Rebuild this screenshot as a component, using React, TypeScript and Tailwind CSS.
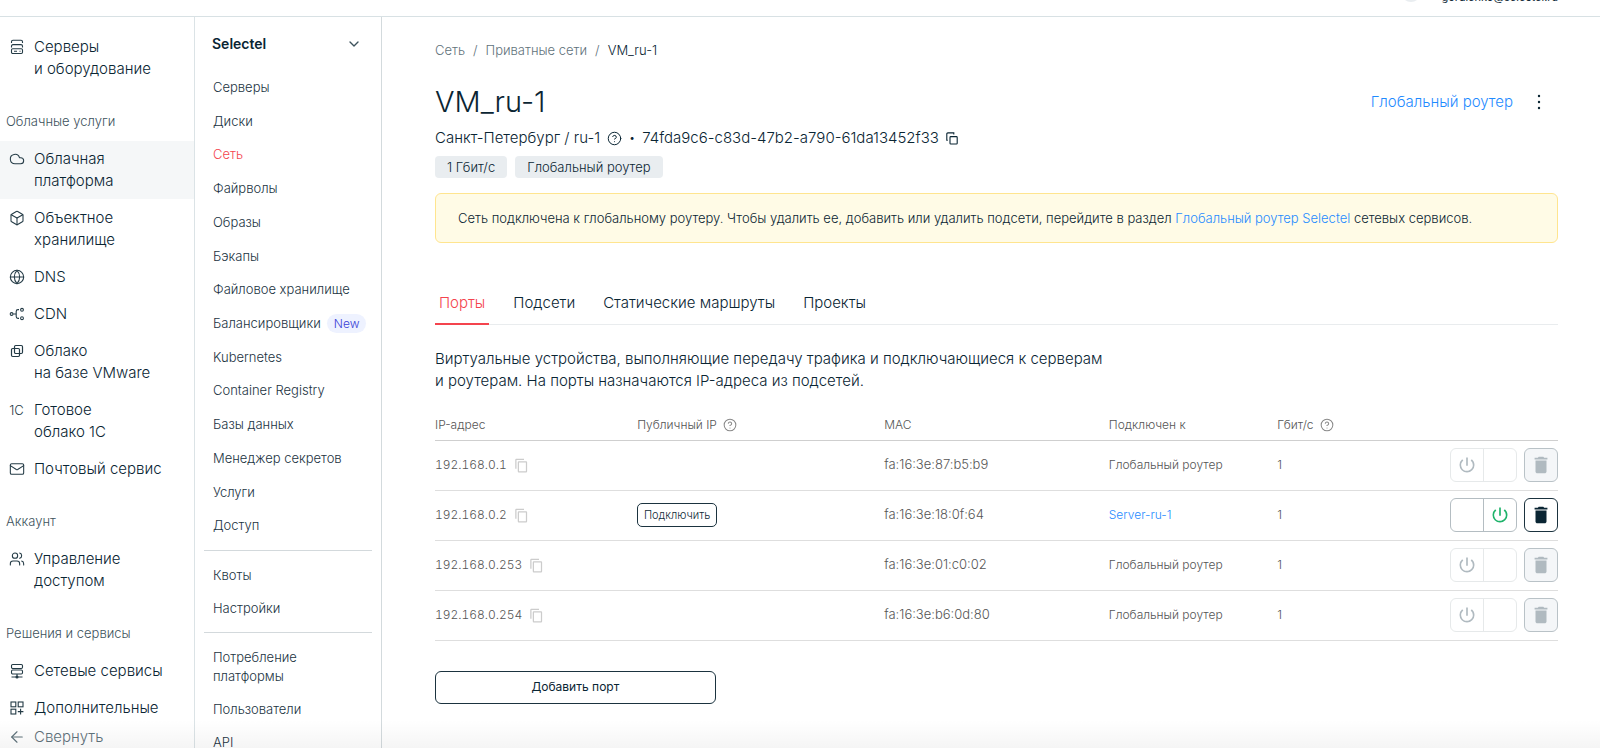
import { ReactNode } from "react";
import { Box, ChevronDown, CircleHelp, Cloud, Globe, Mail, Users, ArrowLeft } from "lucide-react";
import { MdContentCopy, MdDelete, MdPowerSettingsNew } from "react-icons/md";

type NavItem = { label: ReactNode; icon: ReactNode; active?: boolean };
type NavSection = { title?: string; items: NavItem[] };

function ServersIcon() {
  return (
    <svg viewBox="0 0 14 16" className="w-3.5 h-4" fill="none" stroke="currentColor" strokeWidth="1.1">
      <path d="M1.5 4V2.8C1.5 1.8 2 1.3 3 1.3h8c1 0 1.5.5 1.5 1.5V4" />
      <path d="M1.5 8.5V7.2c0-1 .5-1.6 1.5-1.6h8c1 0 1.5.6 1.5 1.6v1.3" />
      <rect x="1.5" y="9.8" width="11" height="4.7" rx="1.2" />
      <path d="M4 12.2h3M9.5 12.2h1" />
    </svg>
  );
}

function CdnIcon() {
  return (
    <svg viewBox="0 0 16 14" className="w-4 h-3.5" fill="none" stroke="currentColor" strokeWidth="1.1">
      <circle cx="2.6" cy="7" r="1.4" />
      <circle cx="13" cy="2.8" r="1.4" />
      <circle cx="13" cy="11.2" r="1.4" />
      <path d="M4.2 7h3M10 2.6H9c-1.2 0-1.8.6-1.8 1.8v5.2c0 1.2.6 1.8 1.8 1.8h1" />
    </svg>
  );
}

function SquaresIcon() {
  return (
    <svg viewBox="0 0 14 14" className="size-3.5" fill="none" stroke="currentColor" strokeWidth="1.2">
      <rect x="4.5" y="1.5" width="8" height="8" rx="1.2" />
      <rect x="1.5" y="4.5" width="8" height="8" rx="1.2" />
    </svg>
  );
}

function NetworkIcon() {
  return (
    <svg viewBox="0 0 14 16" className="w-3.5 h-4" fill="none" stroke="currentColor" strokeWidth="1.1">
      <rect x="1.5" y="1.5" width="11" height="4" rx="1.2" />
      <rect x="1.5" y="7" width="11" height="4" rx="1.2" />
      <path d="M7 11v3M1.5 14h11" />
      <circle cx="7" cy="14" r="1" fill="currentColor" />
    </svg>
  );
}

function GridPlusIcon() {
  return (
    <svg viewBox="0 0 14 14" className="size-3.5" fill="none" stroke="currentColor" strokeWidth="1.1">
      <rect x="1" y="1" width="4.8" height="4.8" />
      <rect x="8.2" y="1" width="4.8" height="4.8" />
      <rect x="1" y="8.2" width="4.8" height="4.8" />
      <path d="M10.6 7.8v5.6M7.8 10.6h5.6" />
    </svg>
  );
}

function CopyIcon() {
  return (
    <svg viewBox="0 0 12 13" className="w-3 h-[13px]" fill="none" stroke="currentColor" strokeWidth="1.1">
      <rect x="4" y="4.6" width="7.2" height="7.4" rx="0.8" />
      <path d="M1.8 8.2H.8V2c0-.7.4-1.1 1.1-1.1h5.9v1.6" />
    </svg>
  );
}

const sections: NavSection[] = [
  {
    items: [{ label: <>Серверы<br />и оборудование</>, icon: <ServersIcon /> }],
  },
  {
    title: "Облачные услуги",
    items: [
      { label: <>Облачная<br />платформа</>, icon: <Cloud className="size-4" strokeWidth={1.6} />, active: true },
      { label: <>Объектное<br />хранилище</>, icon: <Box className="size-4" strokeWidth={1.6} /> },
      { label: "DNS", icon: <Globe className="size-4" strokeWidth={1.6} /> },
      { label: "CDN", icon: <CdnIcon /> },
      { label: <>Облако<br />на базе VMware</>, icon: <SquaresIcon /> },
      { label: <>Готовое<br />облако 1С</>, icon: <span className="text-[13px] leading-4">1С</span> },
      { label: "Почтовый сервис", icon: <Mail className="size-4" strokeWidth={1.6} /> },
    ],
  },
  {
    title: "Аккаунт",
    items: [{ label: <>Управление<br />доступом</>, icon: <Users className="size-4" strokeWidth={1.6} /> }],
  },
  {
    title: "Решения и сервисы",
    items: [
      { label: "Сетевые сервисы", icon: <NetworkIcon /> },
      { label: "Дополнительные", icon: <GridPlusIcon /> },
    ],
  },
];

const platformLinks = [
  "Серверы",
  "Диски",
  "Сеть",
  "Файрволы",
  "Образы",
  "Бэкапы",
  "Файловое хранилище",
  "Балансировщики",
  "Kubernetes",
  "Container Registry",
  "Базы данных",
  "Менеджер секретов",
  "Услуги",
  "Доступ",
];

const ports = [
  { ip: "192.168.0.1", mac: "fa:16:3e:87:b5:b9", target: "Глобальный роутер", speed: 1 },
  { ip: "192.168.0.2", mac: "fa:16:3e:18:0f:64", target: "Server-ru-1", speed: 1, server: true },
  { ip: "192.168.0.253", mac: "fa:16:3e:01:c0:02", target: "Глобальный роутер", speed: 1 },
  { ip: "192.168.0.254", mac: "fa:16:3e:b6:0d:80", target: "Глобальный роутер", speed: 1 },
];

const tabs = ["Порты", "Подсети", "Статические маршруты", "Проекты"];

function MainNav() {
  return (
    <nav className="relative w-[195px] shrink-0 overflow-hidden border-r border-[#dbe3e6] pt-3">
      {sections.map((section, i) => (
        <div key={i}>
          {section.title && (
            <h2 className="pt-[23px] pb-[10px] pl-1.5 text-[13px] leading-5 text-[#3d525c]">{section.title}</h2>
          )}
          <ul className="flex flex-col gap-px pb-px">
            {section.items.map((item, j) => (
              <li key={j}>
                <a
                  href="#"
                  className={`flex gap-2 py-[7px] pl-[7px] text-[15px] leading-[22px] ${item.active ? "bg-[#f5f7f8]" : ""}`}
                >
                  <span className="flex h-[22px] w-[19px] items-center justify-center text-[#243b46]">{item.icon}</span>
                  <span>{item.label}</span>
                </a>
              </li>
            ))}
          </ul>
        </div>
      ))}
      <button className="absolute bottom-0 left-0 flex w-full gap-2 bg-white pl-[7px] text-[15px] leading-[22px] text-[#5f727b]">
        <span className="flex h-[22px] w-[19px] items-center justify-center">
          <ArrowLeft className="size-[18px]" strokeWidth={1.5} />
        </span>
        Свернуть
      </button>
    </nav>
  );
}

function SubLink({ children, active }: { children: ReactNode; active?: boolean }) {
  return (
    <li>
      <a
        href="#"
        className={`flex items-center py-[7px] pl-[18px] text-[13px] leading-[19px] ${active ? "text-[#f4444e]" : "text-[#1b333f]"}`}
      >
        {children}
      </a>
    </li>
  );
}

function PlatformNav() {
  return (
    <nav className="w-[187px] shrink-0 overflow-hidden border-r border-[#d3dadd]">
      <button className="flex w-full items-center justify-between py-4 pr-[19px] pl-[17px] text-sm leading-[22px] font-semibold">
        Selectel
        <ChevronDown className="size-4 text-[#3d525c]" />
      </button>
      <ul className="grid min-h-[472px] auto-rows-fr">
        {platformLinks.map((link) => (
          <SubLink key={link} active={link === "Сеть"}>
            {link}
            {link === "Балансировщики" && (
              <span className="ml-1.5 rounded-full bg-[#eef2ff] px-[7px] text-xs leading-[19px] text-[#3a3fd6]">New</span>
            )}
          </SubLink>
        ))}
      </ul>
      <hr className="mx-[9px] mt-[7px] mb-2 border-[#d3d9dc]" />
      <ul>
        <SubLink>Квоты</SubLink>
        <SubLink>Настройки</SubLink>
      </ul>
      <hr className="mx-[9px] mt-[7px] mb-2 border-[#d3d9dc]" />
      <ul>
        <SubLink>Потребление<br />платформы</SubLink>
        <SubLink>Пользователи</SubLink>
        <SubLink>API</SubLink>
      </ul>
    </nav>
  );
}

function PowerSwitch({ on }: { on?: boolean }) {
  return (
    <button
      role="switch"
      aria-checked={!!on}
      aria-label="Состояние порта"
      disabled={!on}
      className={`grid h-[34px] w-[67px] grid-cols-2 rounded-md border ${on ? "border-[#b4bdc2]" : "border-[#e6e9ea]"}`}
    >
      <span className={`flex h-full items-center justify-center border-r ${on ? "border-[#b4bdc2]" : "border-[#e6e9ea]"}`}>
        {!on && <MdPowerSettingsNew className="size-5 text-[#b0bac0]" />}
      </span>
      <span className="flex h-full items-center justify-center">
        {on && <MdPowerSettingsNew className="size-5 text-[#1fb36b]" />}
      </span>
    </button>
  );
}

function PortsTable() {
  return (
    <table className="mt-[19px] w-full table-fixed text-left text-xs text-[#555]">
      <thead>
        <tr className="h-[29px] border-b border-[#cfcfcf] leading-5">
          <th className="w-[18%] font-light">IP-адрес</th>
          <th className="w-[22%] font-light">
            <span className="flex items-center gap-1.5">
              Публичный IP <CircleHelp className="size-3.5 text-[#888]" strokeWidth={1.75} />
            </span>
          </th>
          <th className="w-[20%] font-light">MAC</th>
          <th className="w-[15%] font-light">Подключен к</th>
          <th className="font-light">
            <span className="flex items-center gap-1.5">
              Гбит/с <CircleHelp className="size-3.5 text-[#888]" strokeWidth={1.75} />
            </span>
          </th>
        </tr>
      </thead>
      <tbody>
        {ports.map((port) => (
          <tr key={port.ip} className="h-[50px] border-b border-[#dedede]">
            <td className="tabular-nums">
              <span className="flex items-center gap-[7px]">
                {port.ip}
                <button aria-label="Скопировать">
                  <MdContentCopy className="size-[15px] text-[#ccc]" />
                </button>
              </span>
            </td>
            <td>
              {port.server && (
                <button className="flex h-6 w-20 items-center justify-center rounded-[5px] border border-[#1b333f] text-[11px] text-[#0f2a37]">
                  Подключить
                </button>
              )}
            </td>
            <td className="text-[13px]">{port.mac}</td>
            <td>
              {port.server ? (
                <a href="#" className="text-[#1f8bff]">{port.target}</a>
              ) : (
                port.target
              )}
            </td>
            <td>
              <span className="flex items-center justify-between">
                {port.speed}
                <span className="flex gap-[7px]">
                  <PowerSwitch on={port.server} />
                  <button
                    aria-label="Удалить порт"
                    disabled={!port.server}
                    className={`flex size-[34px] items-center justify-center rounded-md border ${
                      port.server ? "border-[#1b333f] text-[#0a2533]" : "border-[#b9c2c7] bg-[#f4f6f8] text-[#b0bac0]"
                    }`}
                  >
                    <MdDelete className="size-[22px]" />
                  </button>
                </span>
              </span>
            </td>
          </tr>
        ))}
      </tbody>
    </table>
  );
}

export default function App() {
  return (
    <div className="relative flex h-screen flex-col overflow-hidden bg-white font-['Inter','Noto_Sans',sans-serif] font-light text-[#0a2533]">
      <header className="flex h-[17px] shrink-0 items-end justify-end gap-5 overflow-hidden border-b border-[#d8e1e4] pr-[42px] pb-[11px] text-[11px] leading-4 font-normal">
        <span className="mb-[3px] size-5 rounded-full bg-[#e9edf0]" />
        <span>gordienko@selectel.ru</span>
      </header>
      <div className="flex min-h-0 flex-1">
        <MainNav />
        <PlatformNav />
        <main className="min-w-0 flex-1 pt-[23px] pr-[42px] pl-[53px]">
          <nav className="flex gap-2 text-[13px] leading-5 text-[#5f727b]">
            <a href="#">Сеть</a>
            <span>/</span>
            <a href="#">Приватные сети</a>
            <span>/</span>
            <span className="text-[#0a2533]">VM_ru-1</span>
          </nav>

          <div className="mt-6 flex items-center justify-between">
            <h1 className="text-[29px] leading-9">VM_ru-1</h1>
            <div className="flex items-center gap-4 pr-[9px]">
              <a href="#" className="text-[15px] leading-6 text-[#1f8bff]">Глобальный роутер</a>
              <button aria-label="Ещё" className="flex w-5 justify-center">
                <svg viewBox="0 0 4 18" className="h-[18px] w-1" fill="currentColor">
                  <circle cx="2" cy="3" r="1.2" />
                  <circle cx="2" cy="9" r="1.2" />
                  <circle cx="2" cy="15" r="1.2" />
                </svg>
              </button>
            </div>
          </div>

          <div className="mt-1.5 flex items-center gap-[7px] text-[15px] leading-6">
            <span>Санкт-Петербург / ru-1</span>
            <CircleHelp className="size-[15px]" strokeWidth={1.6} />
            <span className="text-[11px]">•</span>
            <span>74fda9c6-c83d-47b2-a790-61da13452f33</span>
            <button aria-label="Скопировать"><CopyIcon /></button>
          </div>

          <div className="mt-1.5 flex gap-2 text-[13px] leading-[22px]">
            <span className="rounded-sm bg-[#e9edf0] px-3">1 Гбит/с</span>
            <span className="rounded-sm bg-[#e9edf0] px-3">Глобальный роутер</span>
          </div>

          <div className="mt-[15px] rounded-md border border-[#ffe58f] bg-[#fffbe6] px-[22px] py-[14px] text-[13px] leading-5">
            Сеть подключена к глобальному роутеру. Чтобы удалить ее, добавить или удалить подсети, перейдите в раздел{" "}
            <a href="#" className="text-[#1f8bff]">Глобальный роутер Selectel</a> сетевых сервисов.
          </div>

          <div role="tablist" className="mt-12 flex gap-5 border-b border-[#e9ecee] text-[15px] leading-6">
            {tabs.map((tab, i) => (
              <button
                key={tab}
                role="tab"
                aria-selected={i === 0}
                className={`-mb-px border-b-2 px-1 pb-2 ${i === 0 ? "border-[#f4444e] text-[#f4444e]" : "border-transparent"}`}
              >
                {tab}
              </button>
            ))}
          </div>

          <p className="mt-[23px] text-[15px] leading-[22px]">
            Виртуальные устройства, выполняющие передачу трафика и подключающиеся к серверам
            <br />
            и роутерам. На порты назначаются IP-адреса из подсетей.
          </p>

          <PortsTable />

          <button className="mt-[30px] flex h-[33px] w-1/4 items-center justify-center rounded-md border border-[#1b333f] text-xs font-normal">
            Добавить порт
          </button>
        </main>
      </div>
      <div className="pointer-events-none absolute inset-x-0 bottom-0 h-7 bg-gradient-to-t from-black/4 to-transparent" />
    </div>
  );
}
